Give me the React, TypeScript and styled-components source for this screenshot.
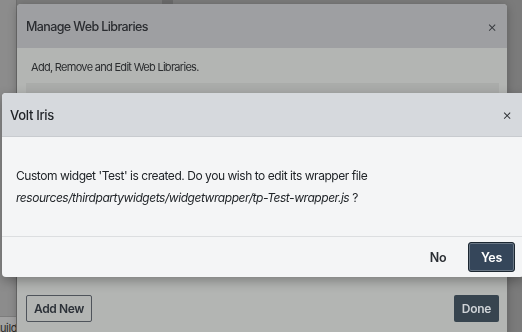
import styled, { createGlobalStyle } from 'styled-components';

const GlobalStyle = createGlobalStyle`
    html, body {
        margin: 0;
        padding: 0;
        width: 522px;
        height: 332px;
        overflow: hidden;
    }
    body {
        font-family: Inter, "Noto Sans", sans-serif;
        background: #7b7b7b;
        color: #212529;
    }
`

const App = () => {
    return (
        <>
            <GlobalStyle />
            <StyledWorkspace>
                <StyledSidebar>
                    <StyledSidebarItem>Build</StyledSidebarItem>
                </StyledSidebar>
                <StyledMain>
                    <StyledSplitter />
                </StyledMain>
            </StyledWorkspace>

            {/* 뒤쪽 모달 */}
            <StyledLibraryModal>
                <StyledLibraryHeader>
                    <StyledLibraryTitle>Manage Web Libraries</StyledLibraryTitle>
                    <StyledClose $dim>×</StyledClose>
                </StyledLibraryHeader>
                <StyledLibraryBody>
                    <StyledDescription>Add, Remove and Edit Web Libraries.</StyledDescription>
                    <StyledLibraryList />
                </StyledLibraryBody>
                <StyledLibraryFooter>
                    <StyledOutlineButton>Add New</StyledOutlineButton>
                    <StyledDoneButton>Done</StyledDoneButton>
                </StyledLibraryFooter>
            </StyledLibraryModal>

            {/* 확인 다이얼로그 */}
            <StyledConfirm>
                <StyledConfirmHeader>
                    <StyledConfirmTitle>Volt Iris</StyledConfirmTitle>
                    <StyledClose>×</StyledClose>
                </StyledConfirmHeader>
                <StyledConfirmBody>
                    <p>Custom widget 'Test' is created. Do you wish to edit its wrapper file</p>
                    <p>
                        <em>resources/thirdpartywidgets/widgetwrapper/tp-Test-wrapper.js</em> ?
                    </p>
                </StyledConfirmBody>
                <StyledConfirmFooter>
                    <StyledTextButton>No</StyledTextButton>
                    <StyledPrimaryButton>Yes</StyledPrimaryButton>
                </StyledConfirmFooter>
            </StyledConfirm>
        </>
    );
};

export default App;


const StyledWorkspace = styled.div`
    display: flex;
    width: 522px;
    height: 332px;
`
const StyledSidebar = styled.div`
    width: 16px;
    background: #8c8c8c;
    border-right: 1px solid #6f6f6f;
    display: flex;
    flex-direction: column;
    justify-content: flex-end;
    overflow: hidden;
`
const StyledSidebarItem = styled.div`
    border-top: 1px solid #7d7d7d;
    background: #a2a2a2;
    height: 15px;
    font-size: 11px;
    line-height: 22px;
    letter-spacing: -0.3px;
    color: #2a2a2a;
    text-indent: -7px;
    white-space: nowrap;
`
const StyledMain = styled.div`
    flex: 1;
    background: #7b7b7b;
    padding-left: 145px;
`
const StyledSplitter = styled.div`
    width: 11px;
    height: 4px;
    background: #6b6b6b;
`
const StyledLibraryModal = styled.div`
    position: fixed;
    left: 17px;
    top: 4px;
    width: 490px;
    height: 340px;
    display: flex;
    flex-direction: column;
    background: #b3b5b3;
    border-radius: 4px 4px 0 0;
    box-shadow: 0 2px 10px rgba(0, 0, 0, 0.25);
    overflow: hidden;
`
const StyledLibraryHeader = styled.div`
    height: 44px;
    flex-shrink: 0;
    display: flex;
    align-items: center;
    justify-content: space-between;
    padding: 0 10px 0 9px;
    background: #9e9fa2;
`
const StyledLibraryTitle = styled.h2`
    margin: 0;
    font-size: 12.5px;
    font-weight: 500;
    letter-spacing: -0.6px;
    color: #2a2c30;
`
const StyledClose = styled.span<{ $dim?: boolean }>`
    font-size: 15px;
    font-weight: 300;
    line-height: 1;
    color: ${(props) => props.$dim ? '#34373b' : '#2a2d31'};
`
const StyledLibraryBody = styled.div`
    padding: 0 8px 0 9px;
`
const StyledDescription = styled.p`
    margin: 0;
    height: 35px;
    line-height: 38px;
    font-size: 11px;
    letter-spacing: -0.7px;
    padding-left: 5px;
    color: #2b2d2f;
`
const StyledLibraryList = styled.div`
    height: 185px;
    background: #aaacaa;
`
const StyledLibraryFooter = styled.div`
    display: flex;
    justify-content: space-between;
    padding: 27px 8px 0 9px;
`
const StyledOutlineButton = styled.button`
    height: 27px;
    padding: 0 7px;
    background: transparent;
    border: 1px solid #4f545b;
    border-radius: 2px;
    font-family: inherit;
    font-size: 12px;
    font-weight: 600;
    letter-spacing: -0.4px;
    color: #2c3138;
`
const StyledDoneButton = styled.button`
    height: 27px;
    padding: 0 8px;
    background: #37444f;
    border: none;
    border-radius: 2px;
    font-family: inherit;
    font-size: 12px;
    font-weight: 600;
    letter-spacing: -0.3px;
    color: #cfd3d7;
`
const StyledConfirm = styled.div`
    position: fixed;
    left: 2px;
    top: 93px;
    width: 522px;
    height: 184px;
    display: flex;
    flex-direction: column;
    background: #f4f5f6;
    border-radius: 4px;
    box-shadow: 0 4px 12px rgba(0, 0, 0, 0.3);
    overflow: hidden;
`
const StyledConfirmHeader = styled.div`
    height: 43px;
    flex-shrink: 0;
    display: flex;
    align-items: center;
    justify-content: space-between;
    padding: 0 12px 0 8px;
    background: #d6d9dd;
    border-bottom: 1px solid #c8cbcf;
`
const StyledConfirmTitle = styled.h2`
    margin: 0;
    font-size: 13px;
    font-weight: 500;
    letter-spacing: -0.3px;
    color: #1f2226;
`
const StyledConfirmBody = styled.div`
    flex: 1;
    padding: 28px 14px 0;
    font-size: 12px;
    line-height: 22px;
    letter-spacing: -0.45px;
    color: #212529;

    p {
        margin: 0;
    }
`
const StyledConfirmFooter = styled.div`
    height: 40px;
    display: flex;
    align-items: center;
    justify-content: flex-end;
    gap: 10px;
    padding-right: 9px;
    border-top: 1px solid #dcdee0;
`
const StyledTextButton = styled.button`
    width: 40px;
    height: 30px;
    background: transparent;
    border: none;
    font-family: inherit;
    font-size: 12.5px;
    font-weight: 600;
    letter-spacing: -0.3px;
    color: #2a2e33;
`
const StyledPrimaryButton = styled.button`
    width: 47px;
    height: 30px;
    background: #35465a;
    border: 1px solid #1c2731;
    box-shadow: inset 0 0 0 1px #6b7886;
    border-radius: 3px;
    font-family: inherit;
    font-size: 12.5px;
    font-weight: 600;
    letter-spacing: -0.3px;
    color: #ffffff;
`
